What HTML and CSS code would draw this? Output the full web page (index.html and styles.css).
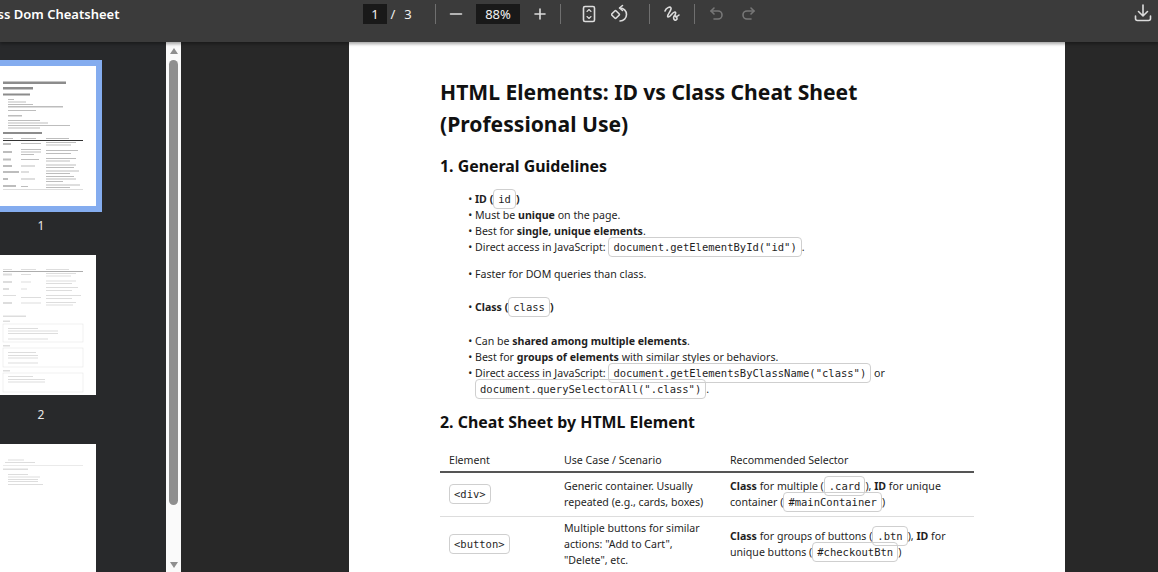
FILE: index.html
```html
<!DOCTYPE html>
<html lang="en">
<head>
    <meta charset="UTF-8">
    <title>Class Dom Cheatsheet</title>
    <link rel="stylesheet" href="styles.css">
</head>
<body>
    <!-- toolbar -->
    <header class="toolbar">
        <div class="doc-title"><span>Class Dom Cheatsheet</span></div>
        <div class="page-box">1</div>
        <span class="page-sep">/</span>
        <span class="page-total">3</span>
        <div class="divider first"></div>
        <button class="tool-btn"><svg viewBox="0 0 20 20"><path d="M4.5 10h11"/></svg></button>
        <div class="zoom-box">88%</div>
        <button class="tool-btn"><svg viewBox="0 0 20 20"><path d="M5 10h10M10 5v10"/></svg></button>
        <div class="divider after-zoom"></div>
        <button class="tool-btn"><svg viewBox="0 0 20 20"><rect x="4.5" y="2.5" width="11" height="15" rx="1.5"/><path d="M8 7.5l2-2 2 2M8 12.5l2 2 2-2" class="thin"/></svg></button>
        <button class="tool-btn"><svg viewBox="0 0 20 20"><path d="M9 4a6.5 6.5 0 1 1 0 13"/><path d="M11.5 1.5l-3 2.5 3 2.5"/><rect x="-3" y="-3" width="6" height="6" rx="1" transform="translate(4.5 10.5) rotate(45)"/></svg></button>
        <div class="divider after-rotate"></div>
        <button class="tool-btn"><svg viewBox="0 0 20 20"><path d="M3 7c1-3 5-5 6-3s-5 8-3 9 5-6 7-5-1 3 0 4 3 0 4-1"/><path d="M12 12c-1 2 0 5 2 4s1-3-1-4"/></svg></button>
        <div class="divider"></div>
        <button class="tool-btn muted narrow"><svg viewBox="0 0 20 20"><path d="M7 4L4 7l3 3"/><path d="M4 7h7a4 4 0 0 1 0 8H7"/></svg></button>
        <button class="tool-btn muted narrow"><svg viewBox="0 0 20 20"><path d="M13 4l3 3-3 3"/><path d="M16 7H9a4 4 0 0 0 0 8h4"/></svg></button>
        <button class="tool-btn download"><svg viewBox="0 0 20 20"><path d="M10 2v11M5.5 8.5L10 13l4.5-4.5"/><path d="M2.5 13v2.5a2 2 0 0 0 2 2h11a2 2 0 0 0 2-2V13"/></svg></button>
    </header>

    <div class="viewer">
        <!-- thumbnails -->
        <aside class="sidebar">
            <div class="thumb-item">
                <div class="thumb selected">
                    <svg viewBox="0 0 108 140">
                        <g class="head">
                            <rect x="15" y="15.5" width="63" height="2.5"/>
                            <rect x="15" y="21" width="30" height="2.5"/>
                            <rect x="15" y="27.5" width="27" height="2"/>
                            <rect x="15" y="66" width="39" height="2"/>
                        </g>
                        <g class="txt">
                            <rect x="20" y="33" width="6" height="1"/>
                            <rect x="20" y="35.5" width="18" height="1"/>
                            <rect x="20" y="38" width="25" height="1"/>
                            <rect x="20" y="40" width="55" height="1.5"/>
                            <rect x="20" y="44" width="28" height="1"/>
                            <rect x="20" y="49" width="14" height="1.5"/>
                            <rect x="20" y="54" width="32" height="1"/>
                            <rect x="20" y="56.5" width="40" height="1"/>
                            <rect x="20" y="59" width="62" height="1"/>
                            <rect x="20" y="61.5" width="32" height="1"/>
                            <rect x="15" y="72" width="10" height="1"/>
                            <rect x="33" y="72" width="15" height="1"/>
                            <rect x="58" y="72" width="23" height="1"/>
                            <rect x="15" y="77" width="8" height="2"/>
                            <rect x="33" y="77" width="20" height="1"/>
                            <rect x="58" y="76" width="30" height="1"/>
                            <rect x="58" y="78.5" width="25" height="1"/>
                            <rect x="15" y="85" width="9" height="2"/>
                            <rect x="33" y="83" width="20" height="1"/>
                            <rect x="33" y="85.5" width="20" height="1"/>
                            <rect x="33" y="88" width="13" height="1"/>
                            <rect x="58" y="84" width="32" height="1"/>
                            <rect x="58" y="87" width="25" height="1"/>
                            <rect x="15" y="92.5" width="8" height="2"/>
                            <rect x="33" y="93" width="18" height="1"/>
                            <rect x="58" y="92" width="30" height="1"/>
                            <rect x="58" y="94.5" width="24" height="1"/>
                            <rect x="15" y="99" width="9" height="2"/>
                            <rect x="33" y="99.5" width="14" height="1"/>
                            <rect x="58" y="98.5" width="30" height="1"/>
                            <rect x="58" y="101" width="28" height="1"/>
                            <rect x="15" y="105" width="16" height="2"/>
                            <rect x="33" y="105.5" width="8" height="1"/>
                            <rect x="58" y="104.5" width="33" height="1"/>
                            <rect x="58" y="107" width="24" height="1"/>
                            <rect x="15" y="112" width="5" height="2"/>
                            <rect x="33" y="112.5" width="14" height="1"/>
                            <rect x="58" y="110" width="28" height="1"/>
                            <rect x="58" y="112.5" width="30" height="1"/>
                            <rect x="58" y="115" width="17" height="1"/>
                            <rect x="15" y="119" width="13" height="2"/>
                            <rect x="33" y="120" width="7" height="1"/>
                            <rect x="58" y="118.5" width="34" height="1"/>
                            <rect x="58" y="121" width="24" height="1"/>
                        </g>
                        <rect class="rule-dark" x="15" y="74" width="80" height="1"/>
                        <rect class="rule-soft" x="15" y="123" width="80" height="1"/>
                    </svg>
                </div>
                <div class="thumb-label">1</div>
            </div>
            <div class="thumb-item">
                <div class="thumb">
                    <svg viewBox="0 0 108 140">
                        <rect class="rule-dark" x="15" y="16" width="80" height="0.8" opacity="0.5"/>
                        <g class="txt light">
                            <rect x="15" y="14" width="9" height="1"/>
                            <rect x="33" y="14" width="15" height="1"/>
                            <rect x="58" y="14" width="23" height="1"/>
                            <rect x="15" y="18.5" width="9" height="2"/>
                            <rect x="33" y="19" width="10" height="1"/>
                            <rect x="58" y="18" width="30" height="1"/>
                            <rect x="58" y="20.5" width="25" height="1"/>
                            <rect x="15" y="26" width="9" height="2"/>
                            <rect x="33" y="26.5" width="10" height="1"/>
                            <rect x="58" y="25.5" width="30" height="1"/>
                            <rect x="58" y="28" width="26" height="1"/>
                            <rect x="15" y="33" width="6" height="2"/>
                            <rect x="33" y="33.5" width="6" height="1"/>
                            <rect x="58" y="32" width="32" height="1"/>
                            <rect x="58" y="35" width="26" height="1"/>
                            <rect x="15" y="40" width="13" height="1"/>
                            <rect x="33" y="42" width="20" height="1"/>
                            <rect x="58" y="40" width="35" height="1"/>
                            <rect x="58" y="43" width="26" height="1"/>
                            <rect x="15" y="47" width="9" height="2"/>
                            <rect x="33" y="47.5" width="20" height="1"/>
                            <rect x="58" y="47" width="30" height="1"/>
                            <rect x="58" y="49.5" width="27" height="1"/>
                            <rect x="15" y="60.5" width="23" height="1.5"/>
                            <rect x="15" y="65.5" width="7" height="1.5"/>
                            <rect x="20" y="73" width="30" height="1"/>
                            <rect x="20" y="75.5" width="50" height="1"/>
                            <rect x="20" y="78" width="50" height="1"/>
                            <rect x="20" y="83.5" width="40" height="1"/>
                            <rect x="15" y="90" width="7" height="1.5"/>
                            <rect x="20" y="97" width="28" height="1"/>
                            <rect x="20" y="100" width="30" height="1"/>
                            <rect x="20" y="102.5" width="30" height="1"/>
                            <rect x="20" y="107.5" width="30" height="1"/>
                            <rect x="15" y="115" width="7" height="1.5"/>
                            <rect x="20" y="121" width="25" height="1"/>
                            <rect x="20" y="124" width="37" height="1"/>
                            <rect x="20" y="126.5" width="37" height="1"/>
                        </g>
                        <rect class="codebox" x="15" y="69" width="80" height="18"/>
                        <rect class="codebox" x="15" y="93" width="80" height="19"/>
                        <rect class="codebox" x="15" y="118" width="80" height="19"/>
                    </svg>
                </div>
                <div class="thumb-label">2</div>
            </div>
            <div class="thumb-item">
                <div class="thumb">
                    <svg viewBox="0 0 108 140">
                        <g class="txt light">
                            <rect x="20" y="15.5" width="16" height="1"/>
                            <rect x="17" y="18" width="30" height="1"/>
                            <rect x="15" y="21" width="80" height="0.6"/>
                            <rect x="15" y="24.5" width="25" height="1.5"/>
                            <rect x="20" y="30" width="20" height="1"/>
                            <rect x="20" y="32.5" width="32" height="1"/>
                            <rect x="20" y="35" width="30" height="1"/>
                            <rect x="20" y="37" width="30" height="1"/>
                            <rect x="20" y="40" width="35" height="1"/>
                        </g>
                    </svg>
                </div>
            </div>
        </aside>

        <div class="scrollbar">
            <span class="arrow up"></span>
            <div class="scroll-thumb"></div>
            <span class="arrow down"></span>
        </div>

        <!-- document page -->
        <main class="stage">
            <article class="page">
                <h1>HTML Elements: ID vs Class Cheat Sheet (Professional Use)</h1>
                <h2>1. General Guidelines</h2>
                <ul class="group">
                    <li><b>ID (</b><code>id</code><b>)</b></li>
                    <li>Must be <b>unique</b> on the page.</li>
                    <li>Best for <b>single, unique elements</b>.</li>
                    <li>Direct access in JavaScript: <code>document.getElementById("id")</code>.</li>
                </ul>
                <ul class="group gap-faster">
                    <li>Faster for DOM queries than class.</li>
                </ul>
                <ul class="group gap-class">
                    <li><b>Class (</b><code>class</code><b>)</b></li>
                </ul>
                <ul class="group gap-shared">
                    <li>Can be <b>shared among multiple elements</b>.</li>
                    <li>Best for <b>groups of elements</b> with similar styles or behaviors.</li>
                    <li>Direct access in JavaScript: <code>document.getElementsByClassName("class")</code> or <code>document.querySelectorAll(".class")</code>.</li>
                </ul>
                <h2 class="second">2. Cheat Sheet by HTML Element</h2>
                <table class="cheat">
                    <thead>
                        <tr>
                            <th class="col-el">Element</th>
                            <th class="col-use">Use Case / Scenario</th>
                            <th>Recommended Selector</th>
                        </tr>
                    </thead>
                    <tbody>
                        <tr>
                            <td><code>&lt;div&gt;</code></td>
                            <td>Generic container. Usually repeated (e.g., cards, boxes)</td>
                            <td><b>Class</b> for multiple (<code>.card</code>), <b>ID</b> for unique container (<code>#mainContainer</code>)</td>
                        </tr>
                        <tr class="tight">
                            <td><code>&lt;button&gt;</code></td>
                            <td>Multiple buttons for similar actions: "Add to Cart", "Delete", etc.</td>
                            <td><b>Class</b> for groups of buttons (<code>.btn</code>), <b>ID</b> for unique buttons (<code>#checkoutBtn</code>)</td>
                        </tr>
                    </tbody>
                </table>
            </article>
        </main>
    </div>
</body>
</html>
```

FILE: styles.css
```css
* {
    margin: 0;
    padding: 0;
    box-sizing: border-box;
}

html, body {
    height: 100%;
    overflow: hidden;
}

body {
    display: flex;
    flex-direction: column;
    font-family: "Noto Sans", sans-serif;
    background: #282828;
}

/* toolbar */
.toolbar {
    display: flex;
    align-items: flex-start;
    flex: 0 0 42px;
    padding-top: 4px;
    background: #3b3b3b;
    color: #f1f1f1;
    font-size: 13px;
    box-shadow: 0 2px 3px rgba(0,0,0,0.35);
    position: relative;
    z-index: 2;
}

.doc-title {
    flex: 0 0 363px;
    height: 20px;
    overflow: hidden;
    font-weight: 600;
    line-height: 20px;
    color: #fff;
    white-space: nowrap;
}

.doc-title span {
    display: block;
    margin-left: -22px;
}

.page-box, .zoom-box {
    height: 20px;
    background: #191919;
    text-align: center;
    line-height: 20px;
}

.page-box {
    width: 24px;
}

.page-sep {
    width: 12px;
    text-align: center;
    line-height: 20px;
}

.page-total {
    width: 16px;
    margin-left: 1px;
    text-align: center;
    line-height: 20px;
}

.divider {
    flex: 0 0 1px;
    height: 20px;
    margin: 0 6px;
    background: #6f6f6f;
}

.divider.first {
    margin: 0 4px 0 19px;
}

.divider.after-zoom {
    margin: 0 12px 0 4px;
}

.divider.after-rotate {
    margin: 0 6px 0 12px;
}

.tool-btn {
    display: flex;
    align-items: center;
    justify-content: center;
    flex: 0 0 32px;
    height: 20px;
    background: none;
    border: none;
}

.tool-btn.narrow {
    flex-basis: 31px;
}

.tool-btn svg {
    width: 20px;
    height: 20px;
    fill: none;
    stroke: #dcdcdc;
    stroke-width: 1.6;
    stroke-linecap: round;
    stroke-linejoin: round;
}

.tool-btn .thin {
    stroke-width: 1.1;
}

.tool-btn.muted svg {
    stroke: #777;
}

.tool-btn.download {
    flex: 0 0 30px;
    margin-left: auto;
    margin-top: -1px;
}

.zoom-box {
    flex: 0 0 44px;
    margin: 0 4px;
}

/* main area */
.viewer {
    display: flex;
    flex: 1;
    min-height: 0;
}

.sidebar {
    flex: 0 0 166px;
    padding-top: 24px;
    background: #28292b;
    overflow: hidden;
}

.thumb-item {
    width: 108px;
    margin-left: -12px;
    margin-bottom: 21px;
}

.thumb {
    width: 108px;
    height: 140px;
    background: #fff;
}

.thumb svg {
    display: block;
    width: 108px;
    height: 140px;
    filter: blur(0.4px);
}

.thumb.selected {
    outline: 6px solid #84acef;
}

.thumb-label {
    margin-top: 12px;
    padding-right: 2px;
    height: 16px;
    font-size: 12px;
    line-height: 16px;
    text-align: center;
    color: #e8e8e8;
}

.head rect {
    fill: #8c8c8c;
}

.txt rect {
    fill: #bdbdbd;
}

.txt.light rect {
    fill: #dddddd;
}

.rule-dark {
    fill: #333;
}

.rule-soft {
    fill: #ddd;
}

.codebox {
    fill: none;
    stroke: #e6e6e6;
    stroke-width: 0.6;
}

/* scrollbar */
.scrollbar {
    display: flex;
    flex-direction: column;
    align-items: center;
    flex: 0 0 15px;
    background: #fafafa;
}

.scroll-thumb {
    width: 9px;
    height: 445px;
    margin-top: 6px;
    background: #8f8f8f;
    border-radius: 5px;
}

.arrow {
    width: 0;
    height: 0;
    border-left: 4.5px solid transparent;
    border-right: 4.5px solid transparent;
}

.arrow.up {
    margin-top: 6px;
    border-bottom: 6px solid #8f8f8f;
}

.arrow.down {
    margin-top: auto;
    margin-bottom: 4px;
    border-top: 6px solid #8f8f8f;
}

.stage {
    flex: 1;
    display: flex;
    padding-left: 168px;
    background: #282828;
    overflow: hidden;
}

/* pdf page */
.page {
    flex: 0 0 716px;
    height: 900px;
    padding: 34px 91px 0 91px;
    background: #fff;
    color: #1f1f1f;
    font-size: 10.6px;
    line-height: 16px;
}

h1 {
    font-size: 21.1px;
    line-height: 32px;
    font-weight: 700;
    color: #111;
}

h2 {
    margin-top: 14px;
    font-size: 15.9px;
    line-height: 24px;
    font-weight: 700;
    color: #111;
}

h2.second {
    margin-top: 13px;
}

.group {
    margin-left: 35px;
    list-style-type: "• ";
}

h2 + .group {
    margin-top: 13px;
}

.gap-faster {
    margin-top: 11px;
}

.gap-class {
    margin-top: 17px;
}

.gap-shared {
    margin-top: 18px;
}

code {
    padding: 3px 4px;
    border: 1px solid #cfcfcf;
    border-radius: 4px;
    font-family: "DejaVu Sans Mono", monospace;
    font-size: 10.5px;
    white-space: nowrap;
}

.cheat {
    width: 100%;
    margin-top: 16px;
    border-collapse: collapse;
    table-layout: fixed;
}

.cheat th {
    height: 22px;
    padding: 0 9px 2px;
    border-bottom: 2px solid #555;
    font-weight: 400;
    text-align: left;
}

.cheat td {
    padding: 5px 9px 6px;
    border-bottom: 1px solid #ddd;
    vertical-align: middle;
}

.cheat .tight td {
    padding: 3px 9px 5px;
}

.col-el {
    width: 115px;
}

.col-use {
    width: 166px;
}
```
